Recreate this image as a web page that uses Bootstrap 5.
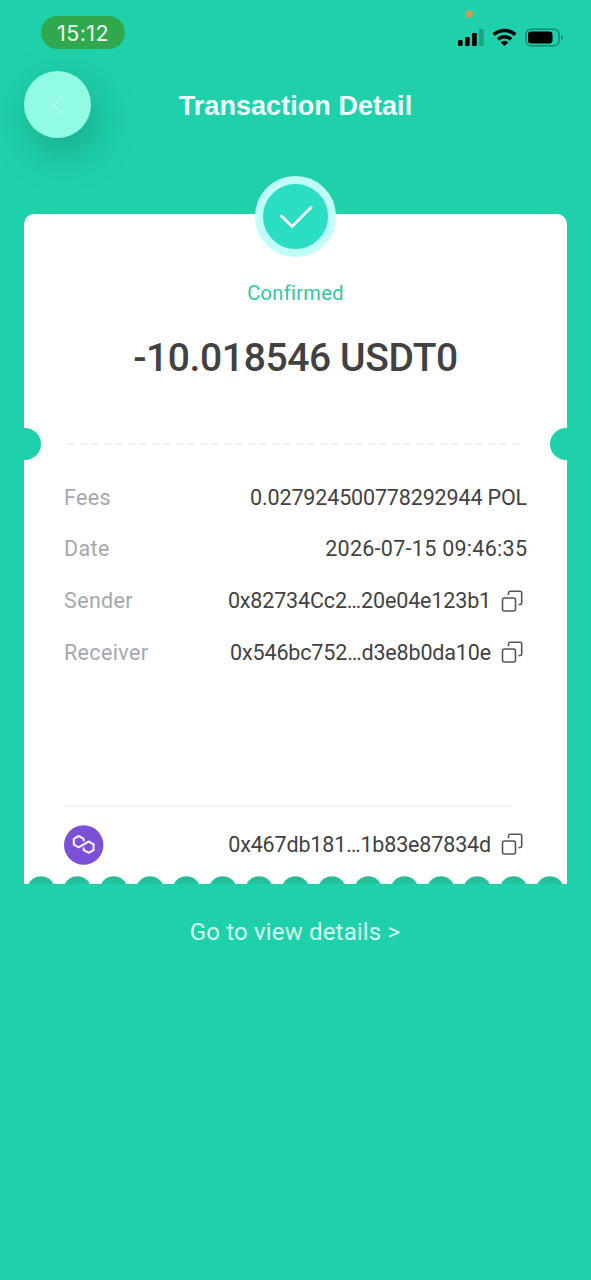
<!DOCTYPE html>
<html lang="en">
<head>
<meta charset="utf-8">
<meta name="viewport" content="width=device-width, initial-scale=1">
<title>Transaction Detail</title>
<link href="https://cdn.jsdelivr.net/npm/bootstrap@5.3.0/dist/css/bootstrap.min.css" rel="stylesheet">
<style>
  body { background: #1fd1ab; font-family: Roboto, sans-serif; min-height: 1280px; overflow-x: hidden; }
  .statusbar { height: 71px; padding: 16px 27px 0 41px; }
  .clock { width: 84px; height: 33px; background: #30a84e; color: #f0fff0; font: 400 21.5px/34px Inter, sans-serif; letter-spacing: .4px; }
  .mic-dot { position: absolute; left: 465px; top: 10px; width: 8px; height: 8px; background: #bba458; }
  .topbar { height: 67px; padding: 0 24px; }
  .back { width: 67px; height: 67px; background: #92fbe5; box-shadow: 6px 14px 38px rgba(10,95,75,.36); }
  .screen-title { color: #effffd; font: 700 27px/67px "Liberation Sans", sans-serif; letter-spacing: .05px; padding-top: 3px; }
  .ticket { margin: 76px 24px 0; height: 670px; width: 543px; background: #fff; border-radius: 10px 10px 0 0; padding: 0 40px; }
  .seal { width: 81px; height: 81px; margin: -38px 0 1px; background: #2bddc3; border: 8px solid #c0fff5; }
  .state { color: #2bca9f; font-size: 20px; line-height: 24px; margin-top: 23px; letter-spacing: .35px; }
  .amount { color: #414141; font-size: 39px; font-weight: 500; line-height: 46px; margin-top: 30px; letter-spacing: -.38px; }
  .tear { height: 32px; margin: 47px -40px 0; }
  .tear .notch { width: 17px; height: 32px; background: #1fd1ab; }
  .entries { margin-top: 12px; }
  .entry { height: 51.7px; color: #424242; font-size: 21.5px; letter-spacing: -.15px; }
  .entry .term { color: #a4a7b1; letter-spacing: .36px; }
  .entry .stamp { letter-spacing: .28px; margin-right: -.3px; }
  .copy { width: 22px; height: 22px; margin: 0 4px 1px 10px; }
  .rule { height: 2px; width: 448px; background: #f1f1f2; margin-top: 126px; }
  .hash-row { height: 76px; padding-top: 7px; }
  .scallops { margin: 0 -40px; width: 543px; height: 8px; }
  .more { color: #d5fff1; font-size: 24px; line-height: 30px; margin-top: 33px; padding-right: 1px; letter-spacing: .17px; text-decoration: none; }
</style>
</head>
<body>
<header>
  <div class="statusbar d-flex justify-content-between position-relative">
    <div class="clock rounded-pill text-center">15:12</div>
    <span class="mic-dot rounded-circle"></span>
    <svg width="107" height="24" viewBox="457 24 107 24" style="margin-top:8px">
      <rect x="458" y="40" width="4.6" height="6" rx="1.2"/>
      <rect x="465" y="37" width="4.6" height="9" rx="1.2"/>
      <rect x="472" y="33" width="4.8" height="13" rx="1.2"/>
      <rect x="479" y="29" width="4.6" height="17" rx="1.2" fill="#16a583"/>
      <path d="M493.7 34.7a16 16 0 0 1 21.6 0M498 39.3a9.7 9.7 0 0 1 13 0" fill="none" stroke="#000" stroke-width="3.6"/>
      <path d="M504.5 46l-3.9-3.8a5.8 5.8 0 0 1 7.8 0z"/>
      <rect x="526" y="29.3" width="33" height="16.4" rx="5" fill="none" stroke="#128b70" stroke-width="1.5"/>
      <rect x="528" y="31.5" width="24.5" height="12" rx="3.2"/>
      <path d="M561 35.2q2 .5 2 2.4t-2 2.4z" fill="#128b70"/>
    </svg>
  </div>
  <div class="topbar d-flex align-items-center justify-content-between">
    <button class="back btn rounded-circle border-0 p-0 flex-shrink-0" aria-label="Back">
      <svg class="d-block mx-auto" width="24" height="24" viewBox="0 0 24 24" fill="none" stroke="#a8fff0" stroke-width="2"><path d="M17 2.5L7.5 12L17 21.5"/></svg>
    </button>
    <h1 class="screen-title mb-0">Transaction Detail</h1>
    <span style="width:67px"></span>
  </div>
</header>
<main>
  <section class="ticket d-flex flex-column">
    <div class="seal rounded-circle align-self-center d-flex align-items-center justify-content-center flex-shrink-0">
      <svg width="36" height="28" viewBox="0 0 36 28" fill="none" stroke="#effffb" stroke-width="3" stroke-linecap="round" stroke-linejoin="round"><path d="M3.500 13L14 23.500L33 4.500"/></svg>
    </div>
    <div class="state text-center">Confirmed</div>
    <div class="amount text-center text-nowrap">-10.018546 USDT0</div>
    <div class="tear d-flex align-items-center justify-content-between">
      <span class="notch rounded-end-pill"></span>
      <svg width="456" height="2"><path d="M0 1H456" stroke="#ebebed" stroke-width="1.6" stroke-dasharray="7 5"/></svg>
      <span class="notch rounded-start-pill"></span>
    </div>
    <div class="entries">
      <div class="entry d-flex align-items-center"><span class="term me-auto">Fees</span><span>0.027924500778292944 POL</span></div>
      <div class="entry d-flex align-items-center"><span class="term me-auto">Date</span><span class="stamp">2026-07-15 09:46:35</span></div>
      <div class="entry d-flex align-items-center"><span class="term me-auto">Sender</span><span>0x82734Cc2…20e04e123b1</span>
        <svg class="copy" viewBox="0 0 22 22" fill="none" stroke="#555" stroke-width="1.6"><rect x="1.500" y="8" width="13" height="13" rx="2"/><path d="M7.500 5V3a1.700 1.700 0 0 1 1.700-1.700H19A1.700 1.700 0 0 1 20.700 3v9.800a1.700 1.700 0 0 1-1.700 1.700h-1.500"/></svg></div>
      <div class="entry d-flex align-items-center"><span class="term me-auto">Receiver</span><span>0x546bc752…d3e8b0da10e</span>
        <svg class="copy" viewBox="0 0 22 22" fill="none" stroke="#555" stroke-width="1.6"><rect x="1.500" y="8" width="13" height="13" rx="2"/><path d="M7.500 5V3a1.700 1.700 0 0 1 1.700-1.700H19A1.700 1.700 0 0 1 20.700 3v9.800a1.700 1.700 0 0 1-1.700 1.700h-1.500"/></svg></div>
    </div>
    <div class="rule"></div>
    <div class="entry hash-row d-flex align-items-center">
      <svg class="me-auto" width="40" height="40" viewBox="0 0 40 40"><circle cx="19.700" cy="20" r="19.700" fill="#7b50d6"/><path d="M19.700 16.200V13.800L14.700 11L9.800 13.800V19.500L14.700 22.300L24.700 16.500L29.600 19.300V25L24.700 27.800L19.700 25V22.600" fill="none" stroke="#f4efff" stroke-width="2.100" stroke-linejoin="round"/></svg>
      <span>0x467db181…1b83e87834d</span>
      <svg class="copy" viewBox="0 0 22 22" fill="none" stroke="#555" stroke-width="1.6"><rect x="1.500" y="8" width="13" height="13" rx="2"/><path d="M7.500 5V3a1.700 1.700 0 0 1 1.700-1.700H19A1.700 1.700 0 0 1 20.700 3v9.800a1.700 1.700 0 0 1-1.700 1.700h-1.500"/></svg>
    </div>
    <svg class="scallops mt-auto flex-shrink-0" viewBox="0 0 543 8">
      <defs>
        <linearGradient id="shade" x1="0" y1="0" x2="0" y2="1"><stop offset="0" stop-color="#27b897"/><stop offset="1" stop-color="#22c5a0"/></linearGradient>
        <pattern id="bite" x="-1.200" y="0" width="36.350" height="8" patternUnits="userSpaceOnUse"><path d="M5.700 8A14 14 0 0 1 30.700 8z" fill="url(#shade)"/></pattern>
      </defs>
      <rect width="543" height="8" fill="url(#bite)"/>
    </svg>
  </section>
  <a class="more d-block text-center" href="#">Go to view details &gt;</a>
</main>
<script src="https://cdn.jsdelivr.net/npm/bootstrap@5.3.0/dist/js/bootstrap.bundle.min.js"></script>
</body>
</html>
